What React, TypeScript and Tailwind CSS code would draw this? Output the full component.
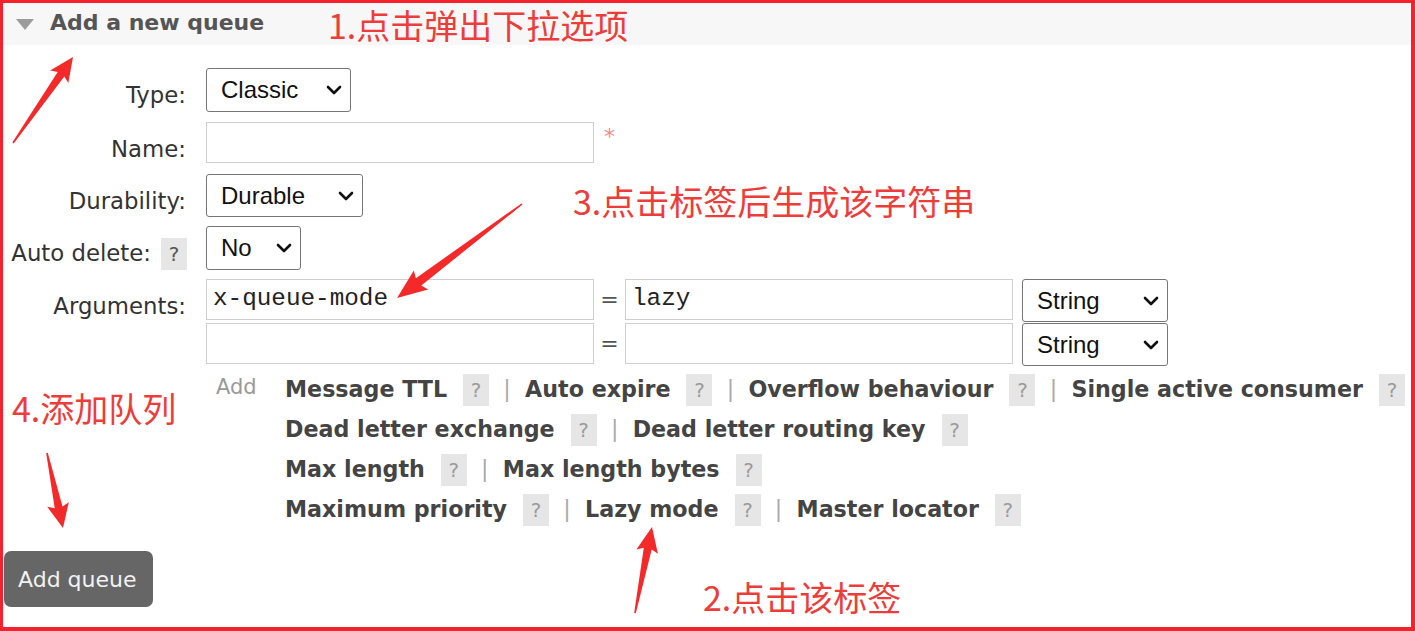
import React from "react";

const SANS = "font-['DejaVu_Sans',Verdana,sans-serif]";

function Chevron() {
  return (
    <svg width="16" height="10" viewBox="0 0 16 10" className="shrink-0">
      <polyline points="2,2 8,8 14,2" fill="none" stroke="#111" strokeWidth="2.6" strokeLinecap="round" strokeLinejoin="round" />
    </svg>
  );
}

function Select({ label, w, h = "h-[44px]" }: { label: string; w: string; h?: string }) {
  return (
    <div className={`${w} ${h} border border-[#767676] rounded-[3px] bg-white flex items-center justify-between pl-[14px] pr-[8px] font-['Liberation_Sans',Arial,sans-serif] text-[24px] text-[#111] leading-none`}>
      <span>{label}</span>
      <Chevron />
    </div>
  );
}

function Q({ className = "" }: { className?: string }) {
  return (
    <span className={`w-[26px] h-[32px] bg-[#e6e6e6] font-normal text-[20px] flex items-center justify-center shrink-0 ${className}`}>?</span>
  );
}

function Label({ children }: { children: React.ReactNode }) {
  return <div className={`w-[183px] shrink-0 flex justify-end items-start pt-[14px] text-[22.8px] leading-[26px] text-[#333] ${SANS}`}>{children}</div>;
}

function Item({ text }: { text: string }) {
  return (
    <>
      <span>{text}</span>
      <Q className="ml-[16px] text-[#9a9a9a]" />
    </>
  );
}

function Bar() {
  return <span className="w-[36px] text-center text-[#aaa] font-normal">|</span>;
}

function Line({ items }: { items: string[] }) {
  return (
    <div className="h-[40px] flex items-center whitespace-nowrap">
      {items.map((t, i) => (
        <React.Fragment key={t}>
          {i > 0 && <Bar />}
          <Item text={t} />
        </React.Fragment>
      ))}
    </div>
  );
}

function Arrow({ x1, y1, x2, y2, hl = 24, hw = 11, sw = 4 }: { x1: number; y1: number; x2: number; y2: number; hl?: number; hw?: number; sw?: number }) {
  const dx = x2 - x1;
  const dy = y2 - y1;
  const len = Math.hypot(dx, dy);
  const ux = dx / len;
  const uy = dy / len;
  const nx = -uy;
  const ny = ux;
  const bx = x2 - ux * hl;
  const by = y2 - uy * hl;
  const p = (x: number, y: number) => `${x.toFixed(1)},${y.toFixed(1)}`;
  const pts = [
    p(x1 + nx * 0.8, y1 + ny * 0.8),
    p(bx + nx * sw + ux * 3, by + ny * sw + uy * 3),
    p(bx + nx * hw, by + ny * hw),
    p(x2, y2),
    p(bx - nx * hw, by - ny * hw),
    p(bx - nx * sw + ux * 3, by - ny * sw + uy * 3),
    p(x1 - nx * 0.8, y1 - ny * 0.8),
  ].join(" ");
  return <polygon points={pts} fill="#f42a2a" />;
}

export default function App() {
  const note = "absolute whitespace-nowrap text-[34px] leading-none text-[#ec3d3a] font-['Noto_Sans_CJK_SC','Noto_Sans',sans-serif]";
  return (
    <div className="relative w-[1415px] h-[631px] bg-white border-solid border-[#f5222d] border-t-[3px] border-l-[3px] border-r-[4px] border-b-[4px] overflow-hidden">
      {/* header */}
      <div className="h-[42px] bg-[#f7f7f7] flex items-center pl-[13px]">
        <svg width="18" height="11" viewBox="0 0 18 11">
          <polygon points="0,0 18,0 9,11" fill="#9c9c9c" />
        </svg>
        <span className={`ml-[16px] text-[22px] font-bold text-[#555] ${SANS} leading-none -mt-[3px]`}>Add a new queue</span>
      </div>

      {/* form */}
      <div className="mt-[23px] flex flex-col">
        <div className="flex">
          <Label>Type:</Label>
          <div className="ml-[20px]"><Select label="Classic" w="w-[145px]" /></div>
        </div>
        <div className="flex mt-[10px]">
          <Label>Name:</Label>
          <div className="ml-[20px] flex items-start">
            <div className="w-[388px] h-[41px] border border-[#cfcfcf] bg-white" />
            <span className="ml-[10px] mt-[4px] text-[22px] leading-none text-[#ee8a8a] font-['DejaVu_Sans',sans-serif]">*</span>
          </div>
        </div>
        <div className="flex mt-[11px]">
          <Label>Durability:</Label>
          <div className="ml-[20px]"><Select label="Durable" w="w-[157px]" h="h-[43px]" /></div>
        </div>
        <div className="flex mt-[9px]">
          <div className={`w-[183px] shrink-0 flex justify-end items-start pt-[12px] text-[22.8px] leading-[26px] text-[#333] ${SANS}`}>
            <span className="pt-[2px]">Auto delete:</span>
            <Q className="ml-[10px] -mr-[1px] h-[31px] text-[#555]" />
          </div>
          <div className="ml-[20px]"><Select label="No" w="w-[95px]" /></div>
        </div>
        <div className="flex mt-[9px]">
          <Label>Arguments:</Label>
          <div className="ml-[20px] flex flex-col">
            <div className="h-[44px] flex items-start">
              <div className="w-[388px] h-[41px] border border-[#cfcfcf] flex items-center pl-[6px] font-['Liberation_Mono','Courier_New',monospace] text-[24.3px] text-[#222]">x-queue-mode</div>
              <span className={`w-[31px] text-center text-[22px] text-[#555] leading-[41px] ${SANS}`}>=</span>
              <div className="w-[388px] h-[41px] border border-[#cfcfcf] flex items-center pl-[6px] font-['Liberation_Mono','Courier_New',monospace] text-[24.3px] text-[#222]">lazy</div>
              <div className="ml-[9px]"><Select label="String" w="w-[146px]" h="h-[43px]" /></div>
            </div>
            <div className="h-[44px] flex items-start">
              <div className="w-[388px] h-[41px] border border-[#cfcfcf]" />
              <span className={`w-[31px] text-center text-[22px] text-[#555] leading-[41px] ${SANS}`}>=</span>
              <div className="w-[388px] h-[41px] border border-[#cfcfcf]" />
              <div className="ml-[9px]"><Select label="String" w="w-[146px]" h="h-[43px]" /></div>
            </div>
            <div className={`mt-[3px] ml-[10px] flex items-start ${SANS}`}>
              <span className="w-[69px] text-[21px] text-[#999] leading-[34px]">Add</span>
              <div className="flex flex-col text-[22.2px] font-bold text-[#444]">
                <Line items={["Message TTL", "Auto expire", "Overflow behaviour", "Single active consumer"]} />
                <Line items={["Dead letter exchange", "Dead letter routing key"]} />
                <Line items={["Max length", "Max length bytes"]} />
                <Line items={["Maximum priority", "Lazy mode", "Master locator"]} />
              </div>
            </div>
          </div>
        </div>
        <div className="mt-[21px] ml-[1px]">
          <button className={`w-[149px] h-[56px] rounded-[7px] bg-[#666] text-[#f2f2f2] text-[22px] ${SANS} flex items-center pl-[14px]`}>Add queue</button>
        </div>
      </div>

      {/* annotations */}
      <svg className="absolute left-[-3px] top-[-3px] pointer-events-none" width="1415" height="631">
        <Arrow x1={13} y1={143} x2={73} y2={57} hl={24} hw={11} sw={4} />
        <Arrow x1={522} y1={204} x2={397} y2={298} hl={30} hw={12} sw={4.5} />
        <Arrow x1={47} y1={453} x2={63} y2={528} hl={24} hw={11} sw={4} />
        <Arrow x1={635} y1={613} x2={652} y2={527} hl={25} hw={11} sw={4} />
      </svg>
      <div className={`${note} left-[325px] top-[5px]`}>1.点击弹出下拉选项</div>
      <div className={`${note} left-[570px] top-[181px]`}>3.点击标签后生成该字符串</div>
      <div className={`${note} left-[9px] top-[388px]`}>4.添加队列</div>
      <div className={`${note} left-[700px] top-[577px]`}>2.点击该标签</div>
    </div>
  );
}
